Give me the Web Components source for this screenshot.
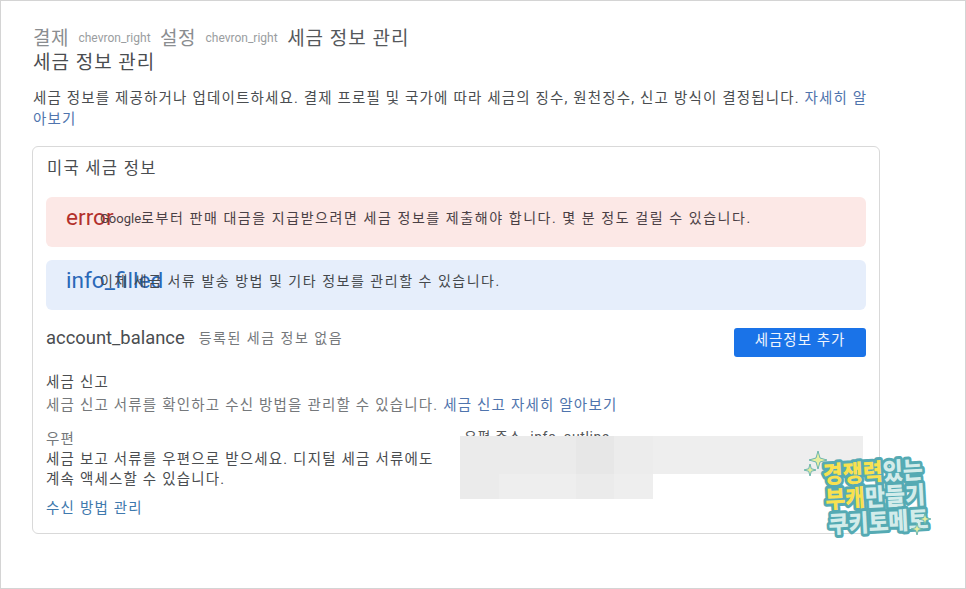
<!DOCTYPE html>
<html lang="ko">
<head>
<meta charset="utf-8">
<title>세금 정보 관리</title>
<style>
  html, body { margin: 0; padding: 0; background: #fff; }
  body { font-family: Roboto, "Noto Sans CJK KR", sans-serif; color: #3c4043; }
  tax-page a { color: #4f74ad; }
</style>
</head>
<body>
<tax-page>
  <tax-breadcrumb slot="crumbs">
    <span>결제</span>
    <i>chevron_right</i>
    <span>설정</span>
    <i>chevron_right</i>
    <b>세금 정보 관리</b>
  </tax-breadcrumb>
  <span slot="title">세금 정보 관리</span>
  <span slot="intro">세금 정보를 제공하거나 업데이트하세요. 결제 프로필 및 국가에 따라 세금의 징수, 원천징수, 신고 방식이 결정됩니다. <a>자세히 알<br>아보기</a></span>

  <tax-card slot="card" heading="미국 세금 정보">
    <tax-alert kind="error" icon="error"><small>Google</small>로부터 판매 대금을 지급받으려면 세금 정보를 제출해야 합니다. 몇 분 정도 걸릴 수 있습니다.</tax-alert>
    <tax-alert kind="info" icon="info_filled">이제 세금 서류 발송 방법 및 기타 정보를 관리할 수 있습니다.</tax-alert>
    <tax-status icon="account_balance" label="등록된 세금 정보 없음" action="세금정보 추가"></tax-status>
    <tax-filing></tax-filing>
  </tax-card>
</tax-page>
<promo-sticker></promo-sticker>

<script>
const KR = 'Roboto, "Noto Sans CJK KR", sans-serif';

class TaxPage extends HTMLElement {
  constructor() {
    super();
    this.attachShadow({ mode: "open" }).innerHTML = `
      <style>
        :host {
          display: block;
          box-sizing: border-box;
          width: 966px;
          height: 589px;
          border: 1px solid #d4d4d4;
          padding: 22px 85px 0 31px;
          font-family: ${KR};
          overflow: hidden;
        }
        .title { margin-top: 1px; font-size: 19px; line-height: 26px; letter-spacing: 1px; color: #4a4d50; padding-left: 1px; }
        .intro {
          margin-top: 12px;
          padding-left: 1px;
          font-size: 14.5px;
          line-height: 21px;
          letter-spacing: 1.17px;
          color: #4a4d50;
          white-space: nowrap;
        }
        ::slotted([slot="intro"]) { display: block; }
        .card { margin-top: 16px; }
      </style>
      <slot name="crumbs"></slot>
      <div class="title"><slot name="title"></slot></div>
      <div class="intro"><slot name="intro"></slot></div>
      <div class="card"><slot name="card"></slot></div>
    `;
  }
}

class TaxBreadcrumb extends HTMLElement {
  constructor() {
    super();
    this.attachShadow({ mode: "open" }).innerHTML = `
      <style>
        :host {
          display: flex;
          align-items: center;
          gap: 9.5px;
          height: 26px;
          padding-left: 1px;
          font-size: 19px;
          letter-spacing: 0.5px;
          color: #8a8d90;
        }
        ::slotted(i) { font-style: normal; font-size: 12px; letter-spacing: 0; color: #9a9da0; margin-top: 3px; }
        ::slotted(b) { font-weight: 400; color: #55585b; letter-spacing: 1px; }
      </style>
      <slot></slot>
    `;
  }
}

class TaxCard extends HTMLElement {
  constructor() {
    super();
    this.attachShadow({ mode: "open" }).innerHTML = `
      <style>
        :host {
          display: block;
          box-sizing: border-box;
          width: 848px;
          height: 388px;
          border: 1px solid #d9d9d9;
          border-radius: 6px;
          padding: 11px 13px 0 13px;
          position: relative;
        }
        h2 {
          margin: 0 0 18px 1px;
          font-size: 16.5px;
          line-height: 21px;
          font-weight: 400;
          letter-spacing: 1.3px;
          color: #4a4d50;
        }
        .stack { display: flex; flex-direction: column; gap: 13px; }
      </style>
      <h2></h2>
      <div class="stack"><slot></slot></div>
    `;
    this.shadowRoot.querySelector("h2").textContent = this.getAttribute("heading");
  }
}

class TaxAlert extends HTMLElement {
  constructor() {
    super();
    this.attachShadow({ mode: "open" }).innerHTML = `
      <style>
        :host {
          display: flex;
          box-sizing: border-box;
          height: 50px;
          padding: 8px 0 0 20px;
          border-radius: 6px;
          font-size: 14px;
          letter-spacing: 1.57px;
          color: #4a4045;
          white-space: nowrap;
        }
        :host([kind="error"]) { background: #fce8e6; }
        :host([kind="info"]) { background: #e6eefb; color: #44484c; letter-spacing: 1.52px; }
        .icon { width: 34px; font-size: 22.6px; line-height: 26px; letter-spacing: 0; }
        :host([kind="error"]) .icon { color: #b3312c; }
        :host([kind="info"]) .icon { color: #2a68b8; }
        .text { line-height: 26px; }
        ::slotted(small) { font-size: 13px; letter-spacing: 0; }
      </style>
      <span class="icon"></span>
      <span class="text"><slot></slot></span>
    `;
    this.shadowRoot.querySelector(".icon").textContent = this.getAttribute("icon");
  }
}

class TaxStatus extends HTMLElement {
  constructor() {
    super();
    this.attachShadow({ mode: "open" }).innerHTML = `
      <style>
        :host {
          display: flex;
          align-items: flex-start;
          height: 32px;
          margin-top: 5px;
          white-space: nowrap;
        }
        .icon { font-size: 18.4px; line-height: 20px; color: #4a4d50; }
        .label { margin-left: 14px; font-size: 14px; line-height: 20px; letter-spacing: 1.5px; color: #75787b; }
        button {
          margin-left: auto;
          width: 132px;
          height: 29px;
          padding: 0 0 8px;
          border: 0;
          border-radius: 3px;
          background: #1a73e8;
          color: #eef4fd;
          font: 14.5px ${KR};
          letter-spacing: 1px;
        }
      </style>
      <span class="icon"></span>
      <span class="label"></span>
      <button type="button"></button>
    `;
    const root = this.shadowRoot;
    root.querySelector(".icon").textContent = this.getAttribute("icon");
    root.querySelector(".label").textContent = this.getAttribute("label");
    root.querySelector("button").textContent = this.getAttribute("action");
  }
}

class TaxFiling extends HTMLElement {
  constructor() {
    super();
    this.attachShadow({ mode: "open" }).innerHTML = `
      <style>
        :host {
          display: block;
          position: relative;
          font-size: 14.5px;
          letter-spacing: 1.2px;
          color: #4a4d50;
        }
        h3 { margin: 0; font-size: 14.5px; font-weight: 400; line-height: 20px; }
        .sub { margin-top: 3px; line-height: 20px; color: #75787b; white-space: nowrap; }
        a { color: #4f74ad; }
        .cols { display: grid; grid-template-columns: 418px 1fr; margin-top: 14px; }
        .method-label { color: #75787b; line-height: 20px; }
        .method-text { line-height: 20px; white-space: nowrap; }
        .manage { display: block; margin-top: 9px; line-height: 20px; color: #3f79ad; }
        .addr { line-height: 20px; font-size: 14px; letter-spacing: .6px; color: #55585b; white-space: nowrap; margin-top: -3px; }
        .redact {
          position: absolute;
          left: 414px;
          top: 63px;
          width: 403px;
          display: grid;
          grid-template-columns: 38.5px 77px 38.5px 39px 210px;
          grid-template-rows: 38px 25px;
        }
        .redact span:nth-child(1) { grid-column: 1 / 3; background: #ebebeb; }
        .redact span:nth-child(2) { background: #e7e7e7; }
        .redact span:nth-child(3) { background: #ececec; }
        .redact span:nth-child(4) { background: #eeeeee; }
        .redact span:nth-child(5) { background: #ebebeb; }
        .redact span:nth-child(6) { background: #eeeeee; }
        .redact span:nth-child(7) { background: #ebebeb; }
        .redact span:nth-child(8) { background: #eeeeee; }
      </style>
      <h3>세금 신고</h3>
      <div class="sub">세금 신고 서류를 확인하고 수신 방법을 관리할 수 있습니다. <a>세금 신고 자세히 알아보기</a></div>
      <div class="cols">
        <div>
          <div class="method-label">우편</div>
          <div class="method-text">세금 보고 서류를 우편으로 받으세요. 디지털 세금 서류에도<br>계속 액세스할 수 있습니다.</div>
          <a class="manage">수신 방법 관리</a>
        </div>
        <div class="addr">우편 주소 &nbsp;info_outline</div>
      </div>
      <div class="redact"><span></span><span></span><span></span><span></span><span></span><span></span><span></span><span></span></div>
    `;
  }
}

class PromoSticker extends HTMLElement {
  constructor() {
    super();
    this.attachShadow({ mode: "open" }).innerHTML = `
      <style>
        :host { position: absolute; left: 800px; top: 445px; width: 140px; height: 100px; display: block; }
        svg { display: block; overflow: visible; }
        text {
          font-family: "Noto Sans CJK KR", sans-serif;
          font-weight: 900;
          font-size: 24px;
          stroke: #55aab3;
          stroke-width: 6px;
          stroke-linejoin: round;
          paint-order: stroke;
          fill: #d3ecea;
        }
        .y { fill: #f8e150; }
        .star { fill: #e6eea0; stroke: #5fb0aa; stroke-width: .9; }
      </style>
      <svg width="140" height="100" viewBox="0 0 140 100">
        <g transform="rotate(-3 70 50)">
          <text x="24" y="36" textLength="100" lengthAdjust="spacingAndGlyphs"><tspan class="y">경쟁력</tspan>있는</text>
          <text x="25" y="61" textLength="100" lengthAdjust="spacingAndGlyphs"><tspan class="y">부캐</tspan>만들기</text>
          <text x="27" y="86" textLength="100" lengthAdjust="spacingAndGlyphs">쿠키토메토</text>
        </g>
        <path class="star" d="M18 6 L20 13 L27 15 L20 17 L18 24 L16 17 L9 15 L16 13 Z"/>
        <path class="star" d="M10 19 L11.3 23.700 L16 25 L11.3 26.300 L10 31 L8.7 26.300 L4 25 L8.7 23.700 Z"/>
        <path class="star" d="M125 68 L126.300 72.700 L131 74 L126.300 75.300 L125 80 L123.700 75.300 L119 74 L123.700 72.700 Z"/>
        <path class="star" d="M117 78 L118.300 82.700 L123 84 L118.300 85.300 L117 90 L115.700 85.300 L111 84 L115.700 82.700 Z"/>
      </svg>
    `;
  }
}

customElements.define("tax-page", TaxPage);
customElements.define("tax-breadcrumb", TaxBreadcrumb);
customElements.define("tax-card", TaxCard);
customElements.define("tax-alert", TaxAlert);
customElements.define("tax-status", TaxStatus);
customElements.define("tax-filing", TaxFiling);
customElements.define("promo-sticker", PromoSticker);
</script>
</body>
</html>
